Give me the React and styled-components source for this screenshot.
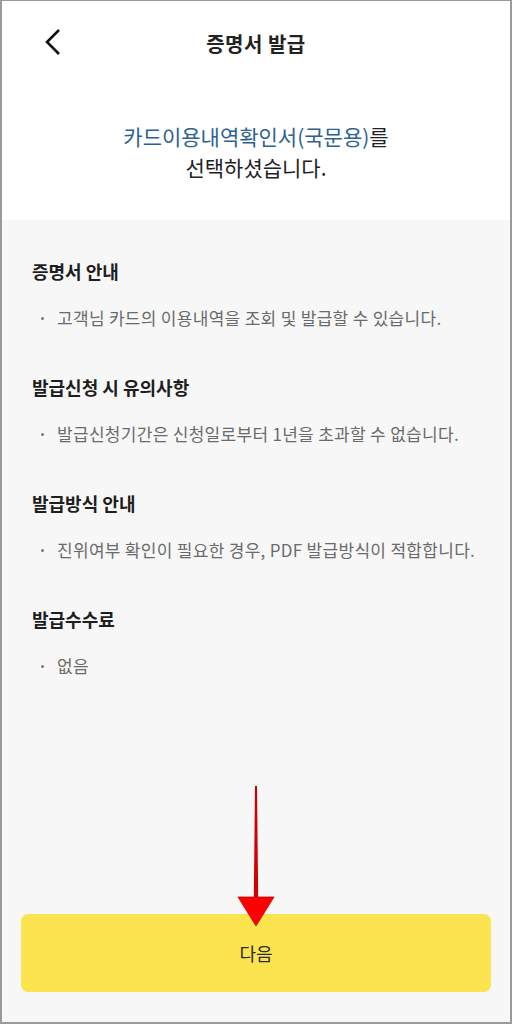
import React from 'react'
import styled, {createGlobalStyle} from 'styled-components'

const GlobalStyle = createGlobalStyle`
    html, body {
        margin: 0;
        padding: 0;
        background: #ffffff;
    }
    body {
        font-family: "Noto Sans CJK KR", "Noto Sans", sans-serif;
    }
`

const sections = [
    {title: '증명서 안내', text: '고객님 카드의 이용내역을 조회 및 발급할 수 있습니다.'},
    {title: '발급신청 시 유의사항', text: '발급신청기간은 신청일로부터 1년을 초과할 수 없습니다.'},
    {title: '발급방식 안내', text: '진위여부 확인이 필요한 경우, PDF 발급방식이 적합합니다.'},
    {title: '발급수수료', text: '없음'},
]

const App = () => {
    return (
        <>
            <GlobalStyle />
            <Frame>
                <Top>
                    <Header>
                        <BackButton aria-label="뒤로">
                            <svg width="20" height="30" viewBox="0 0 20 30">
                                <path d="M15 2 L3 14 L15 26" fill="none" stroke="#111" strokeWidth="2.6" />
                            </svg>
                        </BackButton>
                        <Title>증명서 발급</Title>
                    </Header>
                    <Intro>
                        <Blue>카드이용내역확인서(국문용)</Blue>를<br />
                        선택하셨습니다.
                    </Intro>
                </Top>
                <Body>
                    {sections.map(s => (
                        <Section key={s.title}>
                            <SectionTitle>{s.title}</SectionTitle>
                            <Bullet>{s.text}</Bullet>
                        </Section>
                    ))}
                </Body>
                <Footer>
                    <NextButton>다음</NextButton>
                </Footer>
                <Arrow width="40" height="145" viewBox="0 0 40 145">
                    <path d="M19 0 L21 0 L22.2 112 L17.8 112 Z" fill="#d40000" />
                    <path d="M2 111 L38 111 L20 140 Z" fill="#ff0000" stroke="#c00000" strokeWidth="0.8" />
                </Arrow>
            </Frame>
        </>
    )
}

export default App

const Frame = styled.div`
    position: relative;
    box-sizing: border-box;
    width: 512px;
    height: 1024px;
    border: 1px solid #9a9a9a;
    border-left-width: 2px;
    border-right-width: 2px;
    border-bottom-width: 2px;
    background: #f7f7f7;
    display: flex;
    flex-direction: column;
    overflow: hidden;
`

const Top = styled.div`
    background: #ffffff;
    height: 219px;
    display: flex;
    flex-direction: column;
`

const Header = styled.header`
    position: relative;
    height: 84px;
    display: flex;
    align-items: center;
    justify-content: center;
`

const BackButton = styled.button`
    position: absolute;
    left: 42px;
    top: 27px;
    border: none;
    background: none;
    padding: 0;
    display: flex;
`

const Title = styled.h1`
    margin: 0;
    font-size: 20px;
    font-weight: 700;
    color: #222;
    letter-spacing: 0.5px;
`

const Intro = styled.p`
    margin: 36px 0 0;
    text-align: center;
    font-size: 21px;
    line-height: 31px;
    color: #222;
`

const Blue = styled.span`
    color: #2e6290;
`

const Body = styled.main`
    flex: 1;
    padding: 39px 30px 0;
    display: flex;
    flex-direction: column;
    gap: 46px;
`

const Section = styled.section`
    display: flex;
    flex-direction: column;
    gap: 24px;
`

const SectionTitle = styled.h2`
    margin: 0;
    font-size: 18px;
    line-height: 24px;
    font-weight: 700;
    color: #1e1e1e;
`

const Bullet = styled.div`
    position: relative;
    padding-left: 25px;
    font-size: 17px;
    line-height: 22px;
    letter-spacing: 0.3px;
    color: #6a6a6a;

    &::before {
        content: '';
        position: absolute;
        left: 9px;
        top: 10px;
        width: 3px;
        height: 3px;
        border-radius: 50%;
        background: #777;
    }
`

const Footer = styled.div`
    padding: 0 19px 30px;
`

const NextButton = styled.button`
    width: 100%;
    height: 78px;
    border: none;
    border-radius: 7px;
    background: #fbe44f;
    font-family: "Noto Sans CJK KR", "Noto Sans", sans-serif;
    font-size: 18px;
    color: #2a2a2a;
`

const Arrow = styled.svg`
    position: absolute;
    left: 234px;
    top: 785px;
`
